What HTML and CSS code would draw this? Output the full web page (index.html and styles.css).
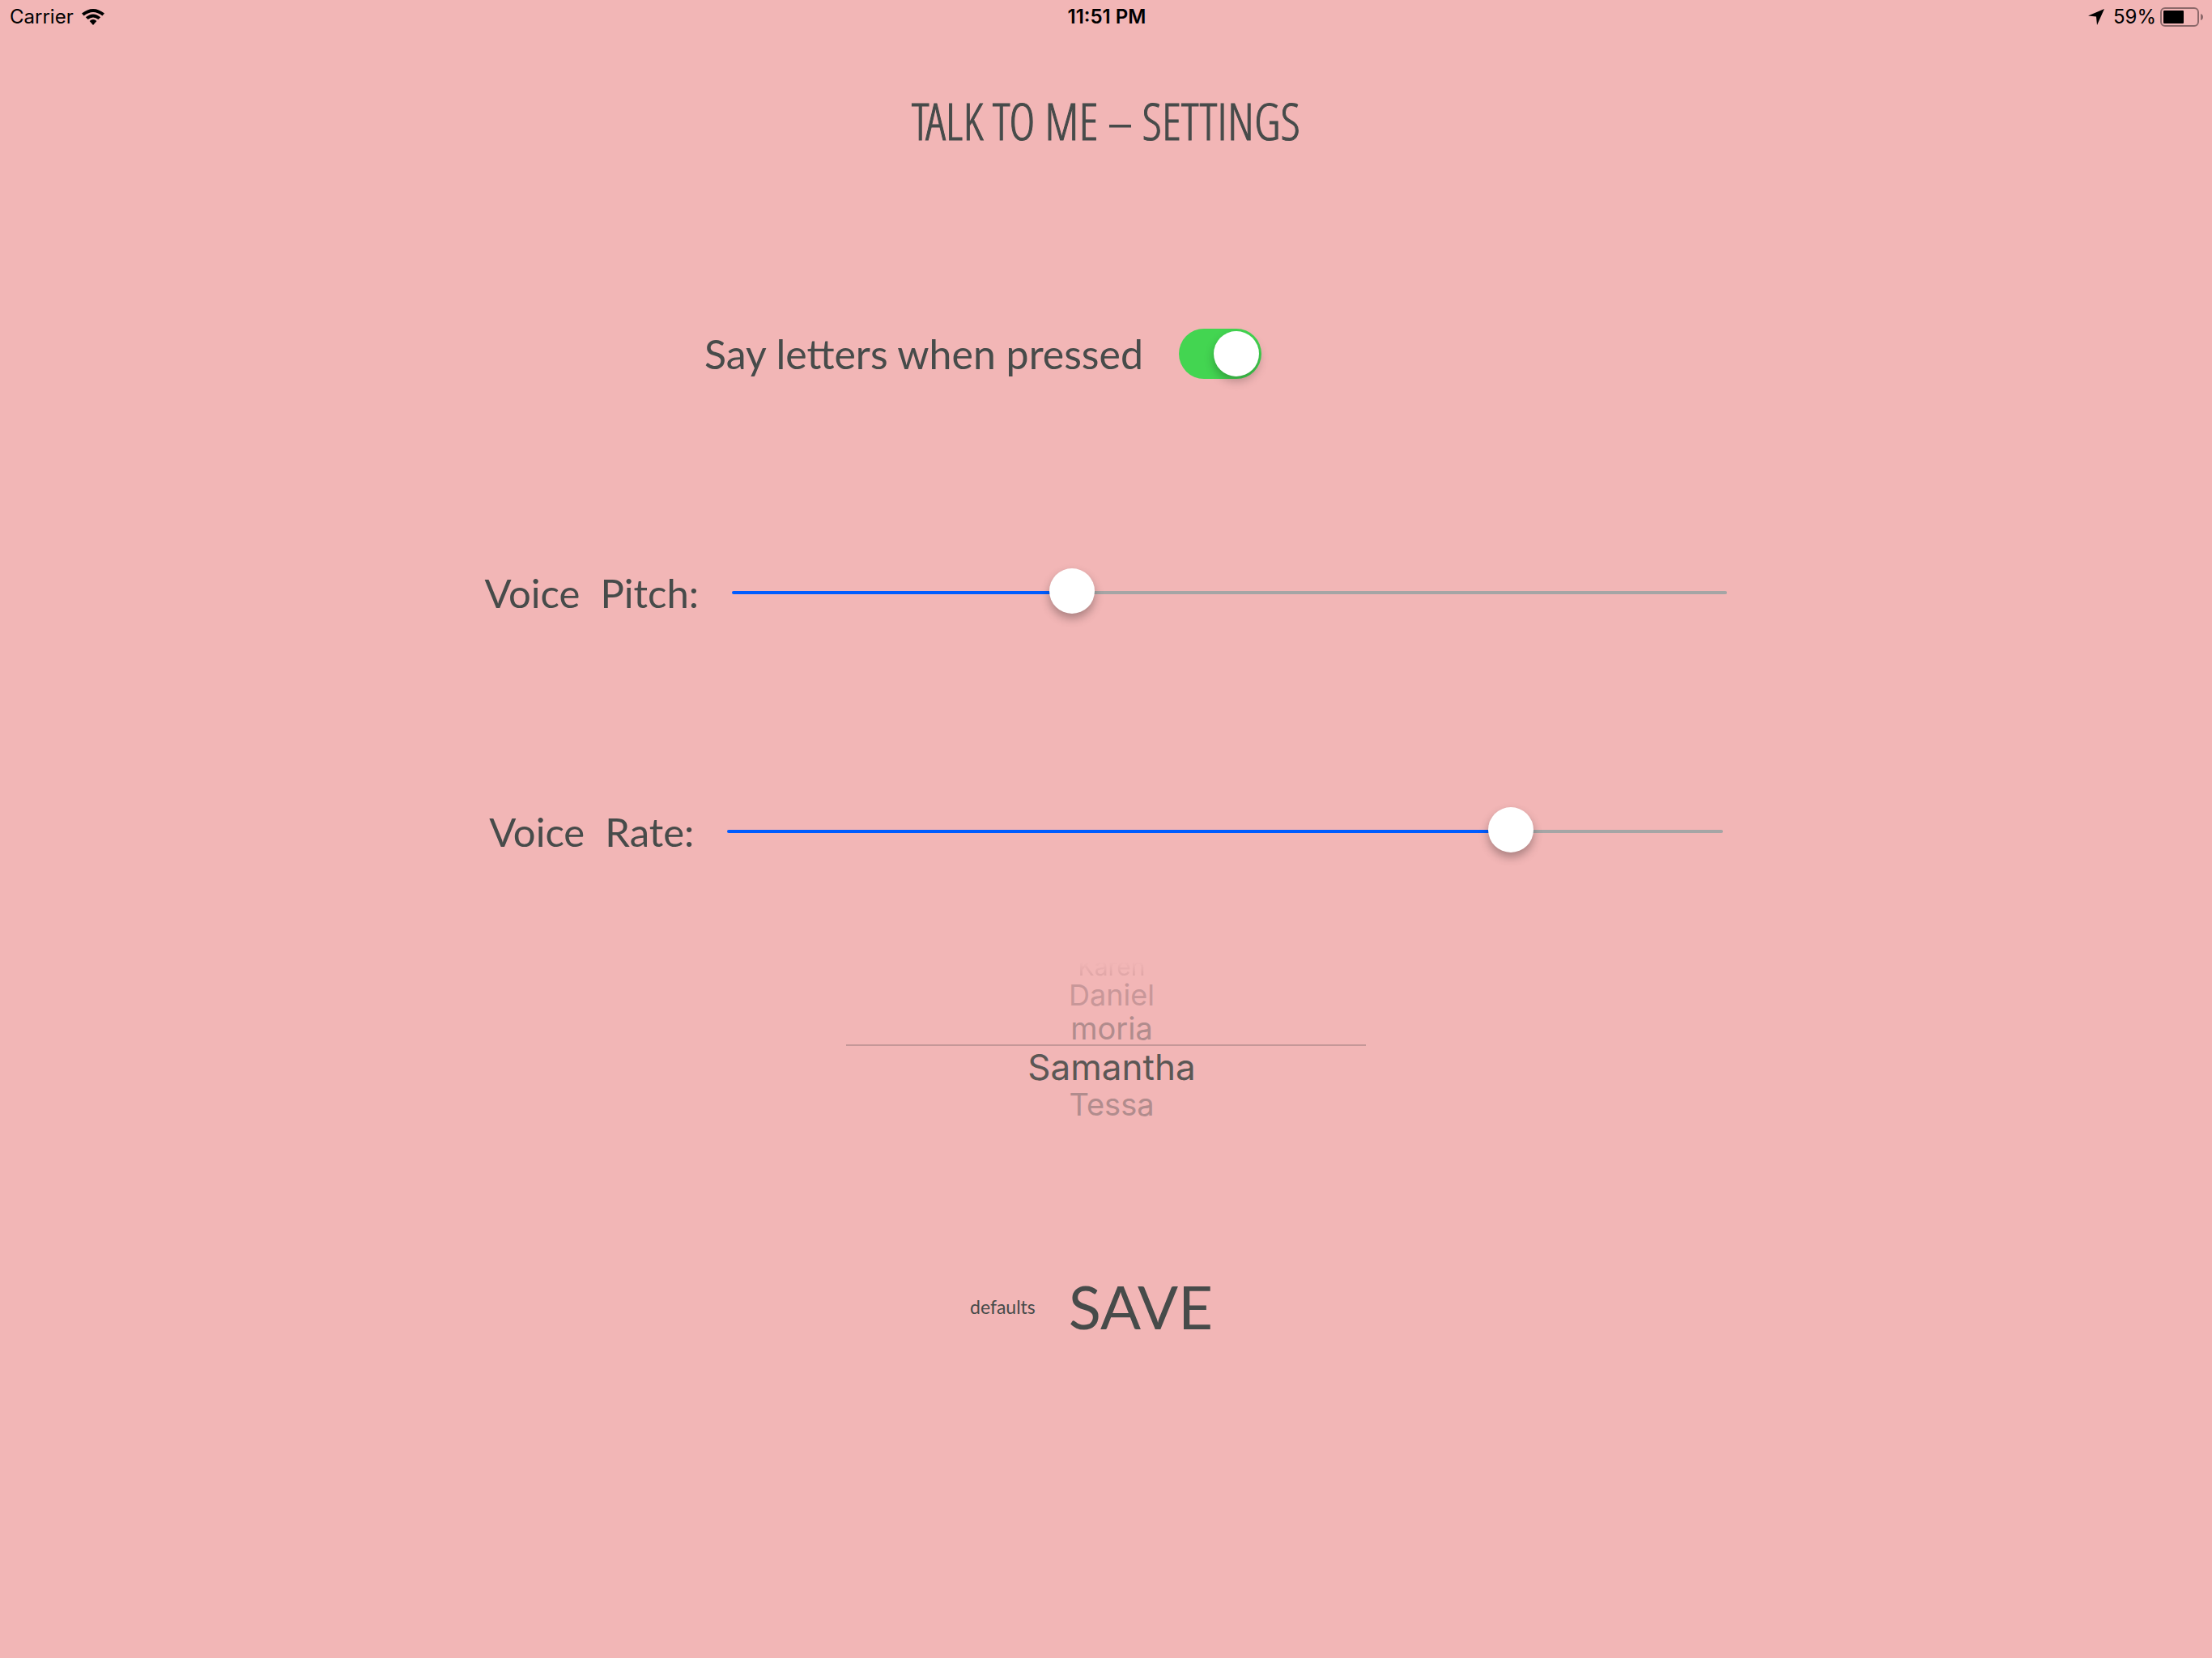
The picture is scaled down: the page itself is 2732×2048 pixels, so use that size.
FILE: index.html
```html
<!DOCTYPE html>
<html lang="en">
<head>
<meta charset="utf-8">
<title>Talk To Me – Settings</title>
<meta name="viewport" content="width=device-width, initial-scale=1">
<link rel="stylesheet" href="styles.css">
</head>
<body>
<header class="status">
  <div class="status-side">
    <span>Carrier</span>
    <svg class="wifi" viewBox="0 0 28 20" width="28" height="20" aria-hidden="true">
      <path d="M0 5.6Q14-5.6 28 5.6L25.4 8.4Q14-.6 2.6 8.4Z"/>
      <path d="M4.8 10.2Q14 2.6 23.2 10.2L20.4 13Q14 7.8 7.6 13Z"/>
      <path d="M9.6 15Q14 11.200 18.400 15L14 20Z"/>
    </svg>
  </div>
  <time class="clock">11:51 PM</time>
  <div class="status-side status-right">
    <svg class="arrow" viewBox="0 0 20 20" width="20" height="20" aria-hidden="true"><path d="M20 0L11 20L10 9.500L0 8.600Z"/></svg>
    <span>59%</span>
    <svg class="battery" viewBox="0 0 54 24" width="54" height="24" aria-hidden="true">
      <rect class="battery-case" x="1" y="1" width="46" height="22" rx="5"/>
      <rect x="4" y="4" width="25" height="16" rx="1"/>
      <path class="battery-nub" d="M50 8Q53 9 53 12Q53 15 50 16Z"/>
    </svg>
  </div>
</header>
<main class="settings">
  <h1 class="title">TALK TO ME – SETTINGS</h1>
  <form class="form">
    <div class="row row-switch">
      <label for="say">Say letters when pressed</label>
      <input class="switch" type="checkbox" role="switch" id="say" checked>
    </div>
    <div class="row row-slider">
      <label for="pitch">Voice  Pitch:</label>
      <input class="slider" type="range" id="pitch" min="0" max="1000" value="334" style="--fill: 34%">
    </div>
    <div class="row row-slider">
      <label for="rate">Voice  Rate:</label>
      <input class="slider" type="range" id="rate" min="0" max="1000" value="801" style="--fill: 80%">
    </div>
    <fieldset class="picker" aria-label="Voice">
      <label class="option edge"><input type="radio" name="voice">Karen</label>
      <label class="option far"><input type="radio" name="voice">Daniel</label>
      <label class="option near"><input type="radio" name="voice">moria</label>
      <label class="option chosen"><input type="radio" name="voice" checked>Samantha</label>
      <label class="option near"><input type="radio" name="voice">Tessa</label>
    </fieldset>
    <div class="actions">
      <button class="defaults" type="reset">defaults</button>
      <button class="save" type="button">SAVE</button>
    </div>
  </form>
</main>
</body>
</html>
```
FILE: styles.css
```css
* {
  box-sizing: border-box;
}

body {
  margin: 0;
  min-height: 100vh;
  background: #f2b6b6;
  color: #474b4a;
  font-family: Lato, sans-serif;
}

/* Status bar */
.status {
  display: grid;
  grid-template-columns: 1fr auto 1fr;
  align-items: center;
  height: 42px;
  padding: 0 10px 0 12px;
  color: #000;
  font: 24px/42px Inter, sans-serif;
}

.status-side {
  display: flex;
  align-items: center;
  gap: 10px;
}

.status-right {
  justify-content: flex-end;
  gap: 5px;
}

.arrow {
  margin-right: 6px;
}

.clock {
  font-weight: 600;
}

.battery-case {
  fill: none;
  stroke: #8c696a;
  stroke-width: 2;
}

.battery-nub {
  fill: #8c696a;
}

/* Settings form */
.title {
  margin: 0;
  padding-top: 67px;
  font: 300 62px/80px "Open Sans Condensed Light", "Open Sans Condensed", "Liberation Sans Narrow", sans-serif;
  text-align: center;
  -webkit-text-stroke: 1px #474b4a;
}

.form {
  display: flex;
  flex-direction: column;
  padding-top: 198px;
}

.row {
  display: flex;
  align-items: center;
  justify-content: center;
  height: 100px;
  margin-bottom: 195px;
  font-size: 50px;
  line-height: 60px;
  white-space: pre;
}

.row-switch {
  gap: 44px;
  padding-right: 304px;
}

.row-slider {
  gap: 41px;
  font-size: 49px;
}

.switch {
  appearance: none;
  display: flex;
  justify-content: flex-end;
  width: 102px;
  height: 62px;
  margin: 0;
  padding: 3px;
  border-radius: 31px;
  background: #43d551;
}

.switch::before {
  content: "";
  width: 56px;
  height: 56px;
  border-radius: 50%;
  background: #fff;
  box-shadow: 0 6px 12px rgba(0, 0, 0, 0.25);
}

.switch:not(:checked) {
  justify-content: flex-start;
  background: #a5a5a5;
}

.slider {
  appearance: none;
  width: 45%;
  height: 56px;
  margin: 0;
  background: none;
}

.slider::-webkit-slider-runnable-track {
  height: 4px;
  border-radius: 2px;
  background: linear-gradient(to right, #005cff var(--fill), #a5a5a5 var(--fill));
}

.slider::-webkit-slider-thumb {
  appearance: none;
  width: 56px;
  height: 56px;
  margin-top: -28px;
  border-radius: 50%;
  background: #fff;
  box-shadow: 0 6px 12px rgba(0, 0, 0, 0.3);
}

/* Voice wheel */
.picker {
  display: flex;
  flex-direction: column;
  align-self: center;
  width: 642px;
  margin: -92px 0 0;
  padding: 0;
  border: 0;
  font-family: Inter, sans-serif;
  text-align: center;
}

.option {
  padding-left: 14px;
}

.option input {
  appearance: none;
  position: absolute;
  margin: 0;
}

.edge {
  font-size: 30px;
  line-height: 28px;
  color: #dca3a4;
  -webkit-mask-image: linear-gradient(transparent 30%, #000);
  mask-image: linear-gradient(transparent 30%, #000);
}

.far {
  font-size: 36px;
  line-height: 42px;
  color: #c89799;
}

.near {
  font-size: 38px;
  line-height: 40px;
  color: #b18c8d;
}

.chosen {
  border-top: 2px solid #c59798;
  font-size: 44px;
  line-height: 52px;
  color: #5b5755;
}

/* Buttons */
.actions {
  display: flex;
  align-items: center;
  justify-content: center;
  gap: 41px;
  margin-top: 180px;
  padding-right: 36px;
}

.actions button {
  padding: 0;
  border: 0;
  background: none;
  color: inherit;
  font-family: inherit;
}

.actions .defaults {
  font-size: 23px;
  line-height: 30px;
}

.actions .save {
  font-size: 74px;
  line-height: 100px;
}
```
